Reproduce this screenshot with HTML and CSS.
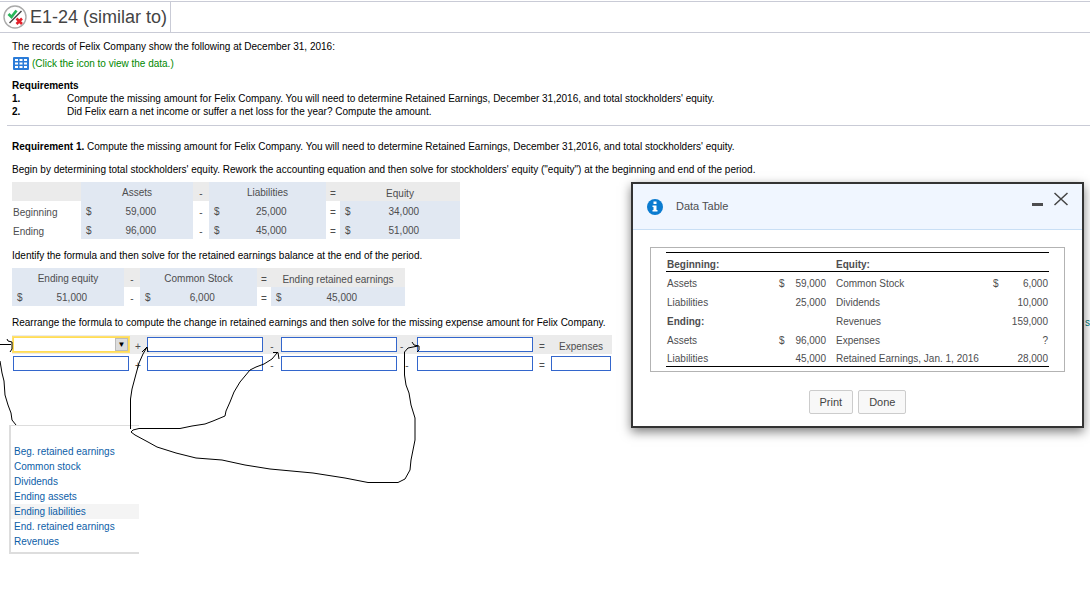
FILE: index.html
```html
<!DOCTYPE html>
<html lang="en">

<head>
    <meta charset="UTF-8">
    <meta name="viewport" content="width=device-width, initial-scale=1.0">
    <title>E1-24 (similar to)</title>
    <link rel="stylesheet" href="styles.css">
</head>

<body>
    <header class="title-bar">
        <h1>
            <svg width="24" height="24" viewBox="0 0 24 24" aria-hidden="true">
                <circle cx="12" cy="12" r="11" fill="#fff" stroke="#aaa" stroke-width="1.4" />
                <path d="M5.500 9L8.500 12L13.500 5.500" fill="none" stroke="#2bb65a" stroke-width="2.800" />
                <path d="M6.500 18L18.500 6" stroke="#444" stroke-width="1.400" />
                <path d="M13.500 13.500L19 19M19 13.500L13.500 19" stroke="#e3202b" stroke-width="2.600" />
            </svg>
            E1-24 (similar to)
        </h1>
    </header>

    <section class="problem">
        <p>The records of Felix Company show the following at December 31, 2016:</p>
        <a class="data-link" href="#data-table">
            <svg width="16" height="13" viewBox="0 0 16 13" aria-hidden="true">
                <rect width="16" height="13" rx="1" fill="#2a7bd8" />
                <path d="M2 2h3v2H2zM6.500 2h3v2h-3zM11 2h3v2h-3zM2 5.500h3v2H2zM6.500 5.500h3v2h-3zM11 5.500h3v2h-3zM2 9h3v2H2zM6.500 9h3v2h-3zM11 9h3v2h-3z" fill="#fff" />
            </svg>
            (Click the icon to view the data.)
        </a>
        <h2>Requirements</h2>
        <ol class="requirements">
            <li><b>1.</b>Compute the missing amount for Felix Company. You will need to determine Retained Earnings, December 31,2016, and total stockholders' equity.</li>
            <li><b>2.</b>Did Felix earn a net income or suffer a net loss for the year? Compute the amount.</li>
        </ol>
    </section>

    <main class="answer">
        <p class="lead"><b>Requirement 1.</b> Compute the missing amount for Felix Company. You will need to determine Retained Earnings, December 31,2016, and total stockholders' equity.</p>
        <p>Begin by determining total stockholders' equity. Rework the accounting equation and then solve for stockholders' equity ("equity") at the beginning and end of the period.</p>

        <table class="formula">
            <colgroup>
                <col class="w-label"><col class="w-first"><col class="w-minus"><col class="w-second"><col class="w-equals"><col class="w-equity">
            </colgroup>
            <tr class="head">
                <td></td>
                <th class="blue">Assets</th>
                <td class="op">-</td>
                <th class="blue">Liabilities</th>
                <td class="op">=</td>
                <th>Equity</th>
            </tr>
            <tr>
                <td class="label">Beginning</td>
                <td class="blue"><div class="money"><span>$</span><span>59,000</span></div></td>
                <td class="op">-</td>
                <td class="blue"><div class="money"><span>$</span><span>25,000</span></div></td>
                <td class="op">=</td>
                <td class="blue"><div class="money"><span>$</span><span>34,000</span></div></td>
            </tr>
            <tr>
                <td class="label">Ending</td>
                <td class="blue"><div class="money"><span>$</span><span>96,000</span></div></td>
                <td class="op">-</td>
                <td class="blue"><div class="money"><span>$</span><span>45,000</span></div></td>
                <td class="op">=</td>
                <td class="blue"><div class="money"><span>$</span><span>51,000</span></div></td>
            </tr>
        </table>

        <p>Identify the formula and then solve for the retained earnings balance at the end of the period.</p>

        <table class="formula">
            <colgroup>
                <col class="w-first"><col class="w-minus"><col class="w-second"><col class="w-equals"><col class="w-retained">
            </colgroup>
            <tr class="head">
                <th class="blue">Ending equity</th>
                <td class="op">-</td>
                <th class="blue">Common Stock</th>
                <td class="op">=</td>
                <th>Ending retained earnings</th>
            </tr>
            <tr>
                <td class="blue"><div class="money"><span>$</span><span>51,000</span></div></td>
                <td class="op">-</td>
                <td class="blue"><div class="money"><span>$</span><span>6,000</span></div></td>
                <td class="op">=</td>
                <td class="blue"><div class="money"><span>$</span><span>45,000</span></div></td>
            </tr>
        </table>

        <p class="split"><span>Rearrange the formula to compute the change in retained earnings and then solve for the missing expense amount for Felix Company.</span><span class="hint">s</span></p>

        <table class="formula entry">
            <colgroup>
                <col class="w-box"><col class="w-minus"><col class="w-box"><col class="w-minus"><col class="w-box"><col class="w-op"><col class="w-box"><col class="w-minus"><col class="w-result">
            </colgroup>
            <tr class="head">
                <td>
                    <div class="picker">
                        <select aria-label="First term"><option></option><option>Beg. retained earnings</option><option>Common stock</option><option>Dividends</option><option>Ending assets</option><option>Ending liabilities</option><option>End. retained earnings</option><option>Revenues</option></select>
                        <span class="arrow">▼</span>
                    </div>
                </td>
                <td class="op">+</td>
                <td><input type="text" aria-label="Second term"></td>
                <td class="op">-</td>
                <td><input type="text" aria-label="Third term"></td>
                <td class="op near">-</td>
                <td><input type="text" aria-label="Fourth term"></td>
                <td class="op">=</td>
                <th>Expenses</th>
            </tr>
            <tr>
                <td><input type="text" aria-label="First amount"></td>
                <td class="op">+</td>
                <td><input type="text" aria-label="Second amount"></td>
                <td class="op">-</td>
                <td><input type="text" aria-label="Third amount"></td>
                <td class="op">-</td>
                <td><input type="text" aria-label="Fourth amount"></td>
                <td class="op">=</td>
                <td><input type="text" aria-label="Expenses"></td>
            </tr>
        </table>
    </main>

    <ul class="menu">
        <li><a href="#">Beg. retained earnings</a></li>
        <li><a href="#">Common stock</a></li>
        <li><a href="#">Dividends</a></li>
        <li><a href="#">Ending assets</a></li>
        <li class="active"><a href="#">Ending liabilities</a></li>
        <li><a href="#">End. retained earnings</a></li>
        <li><a href="#">Revenues</a></li>
    </ul>

    <!-- pen strokes linking the list to the boxes -->
    <svg class="strokes" width="440" height="170" viewBox="0 330 440 170" aria-hidden="true">
        <path d="M0 344.500H11M7 339L8 341L12 342V349L10 352" />
        <path d="M0 361L2 373L4 381L5 395L8 405L11 413L12 420L16 425" />
        <path d="M130.500 429V399L132 389L136 374L139 363L143 354L147 347M142 352L147 347L148 352" />
        <path d="M131 432L133 430L139 428.500H180L192 426L205 424L213 421L225 416L226 411L230 402L234 392L240 382L250 370L256 367L264 364L272 359L277 353M273 352.500H278L279 359" />
        <path d="M131 432L135 435L148 442L157 447L176 453L196 458L222 460L245 465L270 469L313 473L345 478L368 482.500H398L405 479L410 470L411 460L415 440V418L411 405L409 393L406 385L404.500 375V352L408 348L418 346M412 342L414 345L419 346V350L417 352" />
    </svg>

    <div class="dialog" id="data-table" role="dialog" aria-label="Data Table">
        <div class="dialog-head">
            <svg width="16" height="16" viewBox="0 0 16 16" aria-hidden="true">
                <circle cx="8" cy="8" r="8" fill="#0a7bd0" />
                <path d="M6.500 2.500h3v2.500h-3zM5.500 6.500h4V11h1v1.500h-5V11h1V8h-1z" fill="#fff" />
            </svg>
            <span class="dialog-title">Data Table</span>
            <button type="button" class="icon-btn" aria-label="Minimize">
                <svg width="12" height="14" viewBox="0 0 12 14"><path d="M1 11h11v3H1z" fill="#4d4d4f" /></svg>
            </button>
            <button type="button" class="icon-btn" aria-label="Close">
                <svg width="14" height="14" viewBox="0 0 14 14"><path d="M.5 1L13.500 13M13.500 1L.5 13" stroke="#444" stroke-width="1.500" /></svg>
            </button>
        </div>
        <div class="data-box">
            <table class="data">
                <colgroup>
                    <col class="w-name"><col class="w-sign"><col class="w-amount"><col><col class="w-sign"><col class="w-total">
                </colgroup>
                <tr>
                    <th>Beginning:</th><th></th><th></th>
                    <th class="item">Equity:</th><th></th><th></th>
                </tr>
                <tr>
                    <td>Assets</td><td>$</td><td class="num">59,000</td>
                    <td class="item">Common Stock</td><td>$</td><td class="num">6,000</td>
                </tr>
                <tr>
                    <td>Liabilities</td><td></td><td class="num">25,000</td>
                    <td class="item">Dividends</td><td></td><td class="num">10,000</td>
                </tr>
                <tr>
                    <td><b>Ending:</b></td><td></td><td></td>
                    <td class="item">Revenues</td><td></td><td class="num">159,000</td>
                </tr>
                <tr>
                    <td>Assets</td><td>$</td><td class="num">96,000</td>
                    <td class="item">Expenses</td><td></td><td class="num">?</td>
                </tr>
                <tr>
                    <td>Liabilities</td><td></td><td class="num">45,000</td>
                    <td class="item">Retained Earnings, Jan. 1, 2016</td><td></td><td class="num">28,000</td>
                </tr>
            </table>
        </div>
        <div class="actions">
            <button type="button">Print</button>
            <button type="button">Done</button>
        </div>
    </div>
</body>

</html>
```
FILE: styles.css
```css
* {
    box-sizing: border-box;
}

body {
    margin: 0;
    padding-top: 1px;
    font-family: "Liberation Sans", Arial, sans-serif;
    font-size: 10px;
    line-height: 13px;
    color: #000;
    background: #fff;
}

p,
h1,
h2,
ol,
ul {
    margin: 0;
    padding: 0;
    list-style: none;
}

.title-bar {
    border-top: 1px solid #c9cbd6;
    border-bottom: 1px solid #c9cbd6;
}

.title-bar h1 {
    display: inline-flex;
    align-items: center;
    gap: 3px;
    height: 30px;
    padding: 0 3px;
    border-right: 1px solid #c9cbd6;
    font-size: 18px;
    font-weight: normal;
    color: #444;
    vertical-align: top;
}

.problem {
    margin-left: 7px;
    padding: 7px 0 7px 5px;
    border-bottom: 1px solid #c9cbd6;
}

.data-link {
    display: flex;
    align-items: center;
    gap: 3px;
    margin: 4px 0 9px 1px;
    color: #080;
    text-decoration: none;
}

h2 {
    font-size: 10px;
}

.requirements b {
    display: inline-block;
    width: 55px;
}

.answer {
    padding: 14px 0 0 12px;
    white-space: nowrap;
}

.answer .lead {
    margin-bottom: 10px;
}

.split {
    display: flex;
    justify-content: space-between;
}

.hint {
    color: #077;
}

.formula {
    table-layout: fixed;
    border-collapse: collapse;
    width: 0;
    margin: 6px 0 10px;
    color: #4d4d4f;
}

.formula td,
.formula th {
    height: 19px;
    padding: 4px 0 0;
    font-weight: normal;
    text-align: center;
}

.formula .head {
    background: #ebebeb;
}

.formula .blue {
    padding: 1px 0 0;
    background: #e1e8f2;
}

.formula .label {
    padding-left: 1px;
    text-align: left;
}

.w-label { width: 69px; }
.w-first { width: 112px; }
.w-minus { width: 16px; }
.w-second { width: 117px; }
.w-equals { width: 14px; }
.w-equity { width: 120px; }
.w-retained { width: 134px; }
.w-box { width: 118px; }
.w-op { width: 18px; }
.w-result { width: 62px; }
.w-name { width: 112px; }
.w-sign { width: 9px; }
.w-amount { width: 40px; }
.w-total { width: 48px; }

.money {
    display: flex;
    padding: 0 3px 0 5px;
}

.money span:last-child {
    flex: 1;
}

.entry td:not(.op) {
    padding: 0 1px;
}

.formula .near {
    padding-left: 2px;
    text-align: left;
}

.entry input,
.entry select {
    display: block;
    width: 100%;
    height: 15px;
    padding: 0 2px;
    border: 1px solid #36c;
    border-radius: 0;
    background: #fff;
    font: inherit;
}

.picker {
    position: relative;
}

.entry select {
    appearance: none;
    border-color: #fd5;
    box-shadow: 0 0 0 1px #ffe070;
}

.arrow {
    position: absolute;
    top: 1px;
    right: 1px;
    width: 13px;
    height: 13px;
    border: 1px solid #bbb;
    background: #ddd;
    color: #000;
    font-size: 8px;
    line-height: 11px;
    pointer-events: none;
}

.menu {
    position: absolute;
    top: 425px;
    left: 9px;
    width: 130px;
    padding: 18px 0 3px;
    border: 1px solid #ddd;
    border-width: 1px 0 2px 2px;
    background: #fff;
    line-height: 15px;
}

.menu a {
    display: block;
    padding-left: 3px;
    color: #0c5ea8;
    text-decoration: none;
}

.menu .active {
    background: #f4f4f4;
}

.strokes {
    position: absolute;
    top: 330px;
    left: 0;
    fill: none;
    stroke: #000;
    pointer-events: none;
}

.dialog {
    position: absolute;
    top: 182px;
    right: 6px;
    width: 453px;
    border: 2px solid #333;
    background: #fff;
    box-shadow: 0 4px 10px rgba(0, 0, 0, 0.5);
    color: #4d4d4f;
}

.dialog-head {
    display: flex;
    align-items: center;
    height: 46px;
    padding: 0 14px;
    border-bottom: 1px solid #c9dff5;
    background: #f0f6ff;
}

.dialog-title {
    flex: 1;
    padding-left: 13px;
    font-size: 11px;
}

.icon-btn {
    margin: 0 0 15px 11px;
    padding: 0;
    border: 0;
    background: none;
    line-height: 0;
}

.data-box {
    margin: 17px 17px 18px;
    padding: 4px 15px;
    border: 1px solid #b3b3b3;
}

.data {
    table-layout: fixed;
    width: 100%;
    border-collapse: collapse;
    border: solid #000;
    border-width: 1px 0;
    white-space: nowrap;
}

.data th {
    border-bottom: 1px solid #000;
    text-align: left;
}

.data th,
.data td {
    height: 19px;
    padding: 4px 1px 0;
}

.data .num {
    text-align: right;
}

.data .item {
    padding-left: 9px;
}

.actions {
    display: flex;
    justify-content: center;
    gap: 5px;
    padding-bottom: 12px;
}

.actions button {
    height: 24px;
    padding: 0 10px;
    border: 1px solid #ccc;
    border-radius: 2px;
    background: #f8f8f8;
    color: #444;
    font-family: inherit;
    font-size: 11px;
}
```
